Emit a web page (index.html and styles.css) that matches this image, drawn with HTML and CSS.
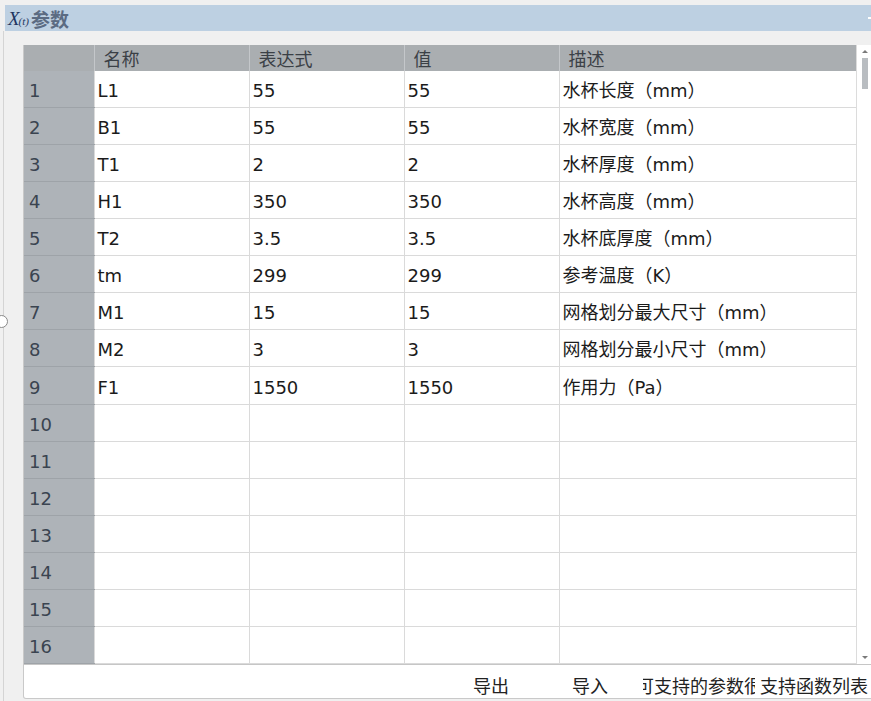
FILE: index.html
```html
<!DOCTYPE html>
<html lang="zh">
<head>
<meta charset="utf-8">
<title>参数</title>
<link rel="stylesheet" href="styles.css">
</head>
<body>
<div class="window">
  <div class="titlebar">
    <span class="xicon">X<span class="xsub">(t)</span></span>
    <span class="title">参数</span>
    <span class="close"></span>
  </div>
  <div class="panel">
    <span class="handle"></span>
    <div class="box">
      <div class="gridwrap">
        <table class="grid">
          <colgroup>
            <col class="c0"><col class="c1"><col class="c2"><col class="c3"><col class="c4">
          </colgroup>
          <thead>
            <tr><th class="corner"></th><th>名称</th><th>表达式</th><th>值</th><th>描述</th></tr>
          </thead>
          <tbody>
            <tr><td class="rn">1</td><td>L1</td><td>55</td><td>55</td><td>水杯长度（mm）</td></tr>
            <tr><td class="rn">2</td><td>B1</td><td>55</td><td>55</td><td>水杯宽度（mm）</td></tr>
            <tr><td class="rn">3</td><td>T1</td><td>2</td><td>2</td><td>水杯厚度（mm）</td></tr>
            <tr><td class="rn">4</td><td>H1</td><td>350</td><td>350</td><td>水杯高度（mm）</td></tr>
            <tr><td class="rn">5</td><td>T2</td><td>3.5</td><td>3.5</td><td>水杯底厚度（mm）</td></tr>
            <tr><td class="rn">6</td><td>tm</td><td>299</td><td>299</td><td>参考温度（K）</td></tr>
            <tr><td class="rn">7</td><td>M1</td><td>15</td><td>15</td><td>网格划分最大尺寸（mm）</td></tr>
            <tr><td class="rn">8</td><td>M2</td><td>3</td><td>3</td><td>网格划分最小尺寸（mm）</td></tr>
            <tr><td class="rn">9</td><td>F1</td><td>1550</td><td>1550</td><td>作用力（Pa）</td></tr>
            <tr><td class="rn">10</td><td></td><td></td><td></td><td></td></tr>
            <tr><td class="rn">11</td><td></td><td></td><td></td><td></td></tr>
            <tr><td class="rn">12</td><td></td><td></td><td></td><td></td></tr>
            <tr><td class="rn">13</td><td></td><td></td><td></td><td></td></tr>
            <tr><td class="rn">14</td><td></td><td></td><td></td><td></td></tr>
            <tr><td class="rn">15</td><td></td><td></td><td></td><td></td></tr>
            <tr><td class="rn">16</td><td></td><td></td><td></td><td></td></tr>
          </tbody>
        </table>
        <div class="scrollbar">
          <span class="arrow up"></span>
          <span class="thumb"></span>
          <span class="track"></span>
          <span class="arrow down"></span>
        </div>
      </div>
      <div class="footer">
        <span class="btn b-export">导出</span>
        <span class="btn b-import">导入</span>
        <span class="btn b-params"><span>可支持的参数很</span></span>
        <span class="btn b-funcs">支持函数列表</span>
      </div>
    </div>
  </div>
</div>
</body>
</html>
```

FILE: styles.css
```css
html, body {
  margin: 0;
  padding: 0;
}
body {
  width: 871px;
  height: 701px;
  overflow: hidden;
  background: #f0f0f0;
  font-family: "DejaVu Sans", "Noto Sans CJK SC", sans-serif;
  color: #1b1b1b;
}
.window {
  padding-top: 5px;
}
.titlebar {
  margin-left: 5px;
  height: 26px;
  background: #bdd0e2;
  display: flex;
  align-items: center;
  padding-left: 3px;
  position: relative;
}
.xicon {
  font-family: "Liberation Serif", "DejaVu Serif", serif;
  font-style: italic;
  font-size: 19px;
  color: #1d3560;
  letter-spacing: -1px;
  margin-top: 1px;
}
.xsub {
  font-size: 11px;
  letter-spacing: 0;
}
.title {
  margin-left: 2px;
  font-family: "Noto Sans CJK SC", sans-serif;
  font-size: 19px;
  font-weight: bold;
  color: #5b6b82;
}
.close {
  position: absolute;
  right: 0;
  top: 12px;
  width: 3px;
  height: 2px;
  background: #ffffff;
}
.panel {
  margin-left: 3px;
  border-left: 1px solid #d4d4d4;
  padding: 14px 0 0 19px;
  height: 670px;
  position: relative;
}
.handle {
  position: absolute;
  left: -9px;
  top: 284px;
  width: 11px;
  height: 11px;
  border-radius: 50%;
  background: #ffffff;
  border: 1px solid #8a8a8a;
}
.box {
  width: 850px;
  background: #ffffff;
  border: 1px solid #c9c9c9;
  border-top: none;
  border-radius: 0 0 3px 3px;
}
.gridwrap {
  display: flex;
  height: 619px;
  border-bottom: 1px solid #c6c6c6;
}
.grid {
  width: 832px;
  table-layout: fixed;
  border-collapse: collapse;
  font-size: 18px;
}
.c0 { width: 70px; }
.c1 { width: 155px; }
.c2 { width: 155px; }
.c3 { width: 155px; }
.c4 { width: 297px; }
.grid th {
  height: 26px;
  padding: 0 0 0 9px;
  background: #aaaeb1;
  color: #3b4046;
  font-family: "Noto Sans CJK SC", sans-serif;
  font-weight: normal;
  text-align: left;
  border-left: 1px solid #c4c7ca;
  line-height: 26px;
}
.grid th.corner {
  border-left: none;
}
.grid td {
  height: 32px;
  padding: 4px 0 0 3px;
  border: 1px solid #dadada;
  border-top: none;
  white-space: nowrap;
  overflow: hidden;
  line-height: 32px;
}
.grid tr td:last-child {
  border-right: none;
}
.grid td.rn {
  background: #aeb3b8;
  color: #3a4450;
  padding-left: 5px;
  border-left: none;
  border-right: none;
  border-bottom: 1px solid #9ea3a8;
}
.scrollbar {
  width: 15px;
  flex: none;
  background: #ffffff;
  border-left: 1px solid #dcdcdc;
  display: flex;
  flex-direction: column;
  align-items: center;
}
.arrow {
  width: 0;
  height: 0;
  border-left: 3px solid transparent;
  border-right: 3px solid transparent;
}
.arrow.up {
  margin-top: 5px;
  border-bottom: 3px solid #7a7a7a;
}
.arrow.down {
  margin-bottom: 5px;
  border-top: 3px solid #7a7a7a;
}
.thumb {
  margin-top: 5px;
  width: 6px;
  height: 31px;
  background: #b9bdc1;
}
.track {
  flex: 1;
}
.footer {
  height: 33px;
  display: flex;
  align-items: flex-end;
  font-family: "Noto Sans CJK SC", sans-serif;
  font-size: 18px;
  color: #222222;
  line-height: 26px;
}
.btn {
  white-space: nowrap;
}
.b-export {
  margin-left: 449px;
}
.b-import {
  margin-left: 63px;
}
.b-params {
  margin-left: 35px;
  width: 112px;
  overflow: hidden;
  display: flex;
  justify-content: center;
}
.b-params span {
  flex: none;
}
.b-funcs {
  margin-left: 5px;
}
```
